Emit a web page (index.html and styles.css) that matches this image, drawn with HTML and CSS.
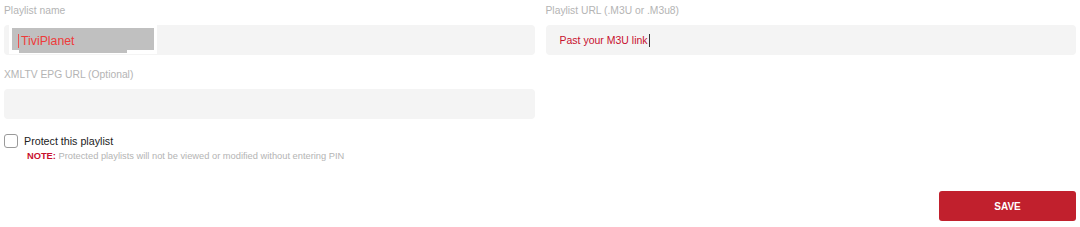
FILE: index.html
```html
<!DOCTYPE html>
<html lang="en">
  <head>
    <meta charset="UTF-8" />
    <title>Add playlist</title>
    <link rel="stylesheet" href="styles.css">
  </head>
  <body>
    <form class="playlist-form">
      <div class="form-grid">
        <div class="form-group">
          <label class="form-label">Playlist name</label>
          <div class="form-input">
            <span class="name-mask"><span class="name-fill"><span class="caret"></span>TiviPlanet</span></span>
          </div>
        </div>
        <div class="form-group">
          <label class="form-label">Playlist URL (.M3U or .M3u8)</label>
          <div class="form-input url-input">Past your M3U link<span class="caret dark"></span></div>
        </div>
        <div class="form-group">
          <label class="form-label">XMLTV EPG URL (Optional)</label>
          <div class="form-input"></div>
        </div>
      </div>

      <div class="protect">
        <label class="protect-check">
          <span class="checkbox"></span>
          Protect this playlist
        </label>
        <p class="note"><b>NOTE:</b> Protected playlists will not be viewed or modified without entering PIN</p>
      </div>

      <div class="actions">
        <button type="button" class="save-button">SAVE</button>
      </div>
    </form>
  </body>
</html>
```

FILE: styles.css
```css
body {
  margin: 0;
  background: #ffffff;
  font-family: "Liberation Sans", Arial, sans-serif;
}
.playlist-form {
  padding: 3px 4px 0 4px;
}
.form-grid {
  display: grid;
  grid-template-columns: 1fr 1fr;
  column-gap: 11px;
  row-gap: 12px;
}
.form-label {
  display: block;
  font-size: 10.3px;
  line-height: 16px;
  color: #b4b4b4;
  margin-bottom: 6px;
}
.form-input {
  display: flex;
  align-items: center;
  height: 30px;
  background: #f4f4f4;
  border-radius: 4px;
  font-size: 10.5px;
}
.url-input {
  padding-left: 14px;
  color: #c8102e;
}
.name-mask {
  position: relative;
  align-self: flex-start;
  margin-left: 5px;
  padding: 3px 3px 4px 3px;
  background: #ffffff;
}
.name-fill {
  display: flex;
  align-items: flex-end;
  width: 142px;
  height: 22px;
  padding-left: 6px;
  background: #c0c0c0;
  color: #ee3b3b;
  font-size: 12.3px;
  line-height: 18px;
  box-sizing: border-box;
}
.name-mask::after {
  content: "";
  position: absolute;
  left: 10px;
  top: 25px;
  width: 108px;
  height: 3px;
  background: #c0c0c0;
}
.caret {
  display: inline-block;
  width: 1px;
  height: 14px;
  margin-right: 2px;
  margin-bottom: 2px;
  background: #ee5050;
}
.caret.dark {
  height: 13px;
  margin: 0 0 0 1px;
  background: #333333;
}
.protect {
  margin-top: 15px;
}
.protect-check {
  display: flex;
  align-items: center;
  gap: 6px;
  font-size: 10.7px;
  color: #222222;
}
.checkbox {
  width: 12px;
  height: 12px;
  border: 1px solid #9a9a9a;
  border-radius: 3px;
  background: #ffffff;
}
.note {
  margin: 3px 0 0 23px;
  font-size: 9.3px;
  color: #b4b4b4;
}
.note b {
  color: #c8102e;
}
.actions {
  display: flex;
  justify-content: flex-end;
  margin-top: 30px;
}
.save-button {
  width: 137px;
  height: 30px;
  border: 0;
  border-radius: 3px;
  background: #c1202d;
  color: #ffffff;
  font-family: "Liberation Sans", Arial, sans-serif;
  font-weight: bold;
  font-size: 10px;
}
```
